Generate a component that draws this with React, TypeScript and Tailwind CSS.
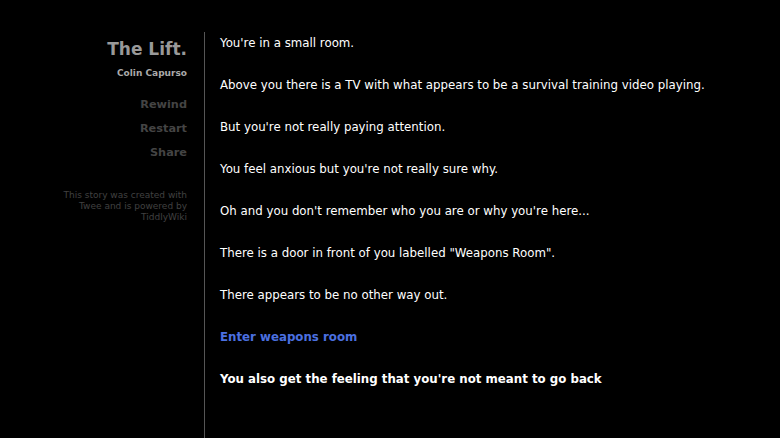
import React from "react";

const font = { fontFamily: '"DejaVu Sans", Verdana, sans-serif' };

export default function App() {
  const paras = [
    "You're in a small room.",
    "Above you there is a TV with what appears to be a survival training video playing.",
    "But you're not really paying attention.",
    "You feel anxious but you're not really sure why.",
    "Oh and you don't remember who you are or why you're here...",
    'There is a door in front of you labelled "Weapons Room".',
    "There appears to be no other way out.",
  ];
  return (
    <div className="w-[780px] h-[438px] bg-black overflow-hidden flex" style={font}>
      <div className="w-[187px] shrink-0 flex flex-col items-end text-right pt-[39px]">
        <div className="text-[17px] font-bold text-[#999] leading-[20px]">The Lift.</div>
        <div className="text-[9px] font-bold text-[#aaa] mt-[9px] leading-[11px]">Colin Capurso</div>
        <div className="mt-[19px] flex flex-col items-end gap-[10px] text-[11.3px] font-bold text-[#444] leading-[14px]">
          <div>Rewind</div>
          <div>Restart</div>
          <div>Share</div>
        </div>
        <div className="mt-[30px] text-[9px] text-[#404040] leading-[11px] w-[140px]">
          This story was created with Twee and is powered by TiddlyWiki
        </div>
      </div>
      <div className="ml-[17px] mt-[32px] w-px bg-[#555] self-stretch" />
      <div className="pl-[15px] pt-[36px] text-[11.8px] text-white leading-[15px] flex flex-col gap-[27px]">
        {paras.map((p) => (
          <p key={p}>{p}</p>
        ))}
        <p className="font-bold text-[#4b70e0]">Enter weapons room</p>
        <p className="font-bold">You also get the feeling that you're not meant to go back</p>
      </div>
    </div>
  );
}
